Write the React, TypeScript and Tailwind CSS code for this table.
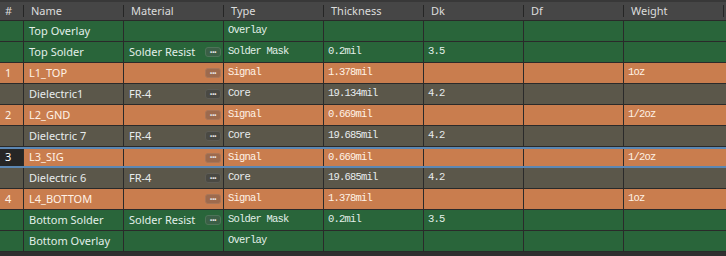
import React from "react";

type Kind = "mask" | "copper" | "core";

type Layer = {
  num?: string;
  name: string;
  material?: string;
  btn?: boolean;
  type: string;
  thick?: string;
  dk?: string;
  weight?: string;
  kind: Kind;
  selected?: boolean;
};

const layers: Layer[] = [
  { name: "Top Overlay", type: "Overlay", kind: "mask" },
  { name: "Top Solder", material: "Solder Resist", btn: true, type: "Solder Mask", thick: "0.2mil", dk: "3.5", kind: "mask" },
  { num: "1", name: "L1_TOP", btn: true, type: "Signal", thick: "1.378mil", weight: "1oz", kind: "copper" },
  { name: "Dielectric1", material: "FR-4", btn: true, type: "Core", thick: "19.134mil", dk: "4.2", kind: "core" },
  { num: "2", name: "L2_GND", btn: true, type: "Signal", thick: "0.669mil", weight: "1/2oz", kind: "copper" },
  { name: "Dielectric 7", material: "FR-4", btn: true, type: "Core", thick: "19.685mil", dk: "4.2", kind: "core" },
  { num: "3", name: "L3_SIG", btn: true, type: "Signal", thick: "0.669mil", weight: "1/2oz", kind: "copper", selected: true },
  { name: "Dielectric 6", material: "FR-4", btn: true, type: "Core", thick: "19.685mil", dk: "4.2", kind: "core" },
  { num: "4", name: "L4_BOTTOM", btn: true, type: "Signal", thick: "1.378mil", weight: "1oz", kind: "copper" },
  { name: "Bottom Solder", material: "Solder Resist", btn: true, type: "Solder Mask", thick: "0.2mil", dk: "3.5", kind: "mask" },
  { name: "Bottom Overlay", type: "Overlay", kind: "mask" },
];

const rowStyle: Record<Kind, string> = {
  mask: "bg-[#29653a] text-[#e2efe9]",
  copper: "bg-[#c97d4e] text-[#fff2e6]",
  core: "bg-[#5b574a] text-[#e8ecee]",
};

const btnStyle: Record<Kind, string> = {
  mask: "bg-[#3b5f46] border-[#4d7358]",
  copper: "bg-[#9d6a4d] border-[#a97658]",
  core: "bg-[#4a4943] border-[#5e5c55]",
};

const sans = "font-['Noto_Sans',sans-serif] text-[11px]";
const mono = "font-['Liberation_Mono',monospace] text-[10.5px] tracking-[-0.8px]";

const headers = ["Name", "Material", "Type", "Thickness", "Dk", "Df", "Weight"];

function MoreButton({ kind }: { kind: Kind }) {
  return (
    <div
      className={`ml-auto mr-[2px] flex h-[10px] w-[16px] items-center justify-center rounded-[3px] border ${btnStyle[kind]}`}
    >
      <span className="text-[7px] leading-none tracking-[-0.5px] text-[#e8e8e8]">•••</span>
    </div>
  );
}

export default function App() {
  return (
    <div className="h-[256px] w-[726px] bg-[#2f2f2f] select-none">
      {/* header */}
      <div className={`flex h-[21px] items-center border-t-2 border-b border-t-[#383838] border-b-[#2a2a2a] bg-[#464646] text-[#dcdcdc] ${sans}`}>
        <div className="w-[23px] pl-[5px]">#</div>
        {headers.map((h) => (
          <div key={h} className="flex w-[100px] items-center">
            <div className="h-[12px] w-px bg-[#252525]" />
            <span className="pl-[7px]">{h}</span>
          </div>
        ))}
        <div className="h-[12px] w-px bg-[#252525]" />
      </div>

      {layers.map((l) => (
        <div
          key={l.name}
          className={`flex h-[21px] items-stretch ${
            l.selected ? "border-y-2 border-[#5c87b3]" : "border-b border-[#2a2a2a]"
          } ${rowStyle[l.kind]}`}
        >
          <div
            className={`flex w-[24px] items-center border-r border-[#2a2a2a] pl-[5px] ${sans} ${
              l.selected ? "bg-[#262626] text-white" : ""
            }`}
          >
            {l.num}
          </div>
          <div className={`flex w-[100px] items-center border-r border-[#2a2a2a] pl-[5px] ${sans}`}>{l.name}</div>
          <div className={`flex w-[100px] items-center border-r border-[#2a2a2a] pl-[5px] ${sans}`}>
            <span>{l.material}</span>
            {l.btn && <MoreButton kind={l.kind} />}
          </div>
          <div className={`flex w-[100px] items-center border-r border-[#2a2a2a] pl-[4px] ${mono}`}>{l.type}</div>
          <div className={`flex w-[100px] items-center border-r border-[#2a2a2a] pl-[4px] ${mono}`}>{l.thick}</div>
          <div className={`flex w-[100px] items-center border-r border-[#2a2a2a] pl-[4px] ${mono}`}>{l.dk}</div>
          <div className={`flex w-[100px] items-center border-r border-[#2a2a2a] pl-[4px] ${mono}`} />
          <div className={`flex flex-1 items-center pl-[4px] ${mono}`}>{l.weight}</div>
        </div>
      ))}
    </div>
  );
}
